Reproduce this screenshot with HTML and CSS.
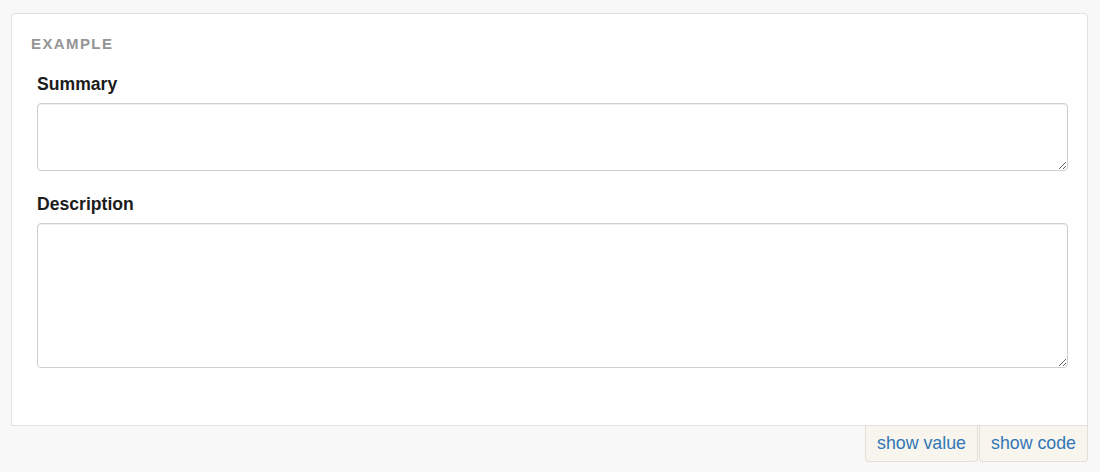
FILE: index.html
```html
<!DOCTYPE html>
<html>
<head>
<meta charset="utf-8">
<link rel="stylesheet" href="styles.css">
</head>
<body>
<div class="page">
  <div class="example">
    <div class="example-title">Example</div>
    <form class="form">
      <div class="form-group">
        <label class="label">Summary</label>
        <textarea class="field field-sm"></textarea>
      </div>
      <div class="form-group">
        <label class="label">Description</label>
        <textarea class="field field-lg"></textarea>
      </div>
    </form>
  </div>
  <div class="actions">
    <button class="tab" type="button">show value</button>
    <button class="tab" type="button">show code</button>
  </div>
</div>
</body>
</html>
```
FILE: styles.css
```css
html, body {
  margin: 0;
  padding: 0;
  background: #f8f8f8;
  font-family: "Liberation Sans", Arial, sans-serif;
}
.page {
  padding: 13px 12px 0 11px;
}
.example {
  background: #fff;
  border: 1px solid #e1e1e1;
  border-radius: 4px 4px 0 0;
  padding: 21px 19px 57px 19px;
}
.example-title {
  font-size: 15px;
  line-height: 17px;
  font-weight: 700;
  letter-spacing: 1.4px;
  text-transform: uppercase;
  color: #959595;
}
.form {
  margin-top: 22px;
  padding-left: 6px;
}
.form-group + .form-group {
  margin-top: 23px;
}
.label {
  display: block;
  font-size: 17.6px;
  line-height: 20px;
  font-weight: 700;
  color: #1c1c1c;
  margin-bottom: 9px;
}
.field {
  display: block;
  box-sizing: border-box;
  width: 100%;
  margin: 0;
  border: 1px solid #cfcfcf;
  border-radius: 4px;
  box-shadow: inset 0 1px 1px rgba(0,0,0,0.075);
  background: #fff;
  font-family: inherit;
  font-size: 16px;
  padding: 6px 12px;
}
.field-sm { height: 68px; }
.field-lg { height: 145px; }
.actions {
  display: flex;
  justify-content: flex-end;
  margin-top: -1px;
}
.tab {
  box-sizing: border-box;
  height: 37px;
  margin: 0 0 0 1px;
  padding: 0 11px;
  background: #f7f5ee;
  border: 1px solid #e3e0d8;
  border-top-color: #e1e1e1;
  border-radius: 0 0 4px 4px;
  font-family: "Liberation Sans", Arial, sans-serif;
  font-size: 17.8px;
  color: #3277b5;
  cursor: pointer;
}
```
